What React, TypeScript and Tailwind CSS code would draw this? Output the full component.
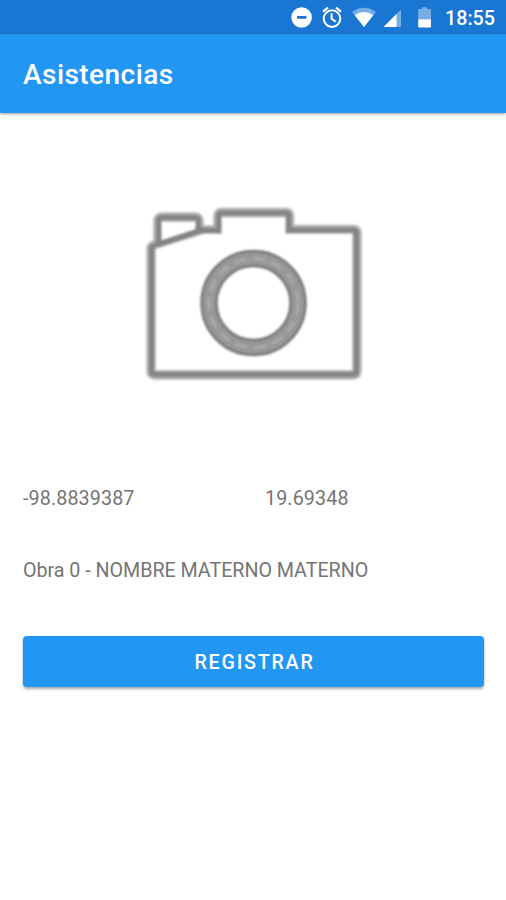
const silhouette =
  "M155 374.5 Q151.5 374.5 151.5 371 V249 Q151.5 246.5 154 245.5 L201 230.5 H218.5 V216 Q218.5 213 221.5 213 H286 Q289 213 289 216 V230 H353.5 Q356.5 230 356.5 233 V371 Q356.5 374.5 353 374.5 Z M158.5 243 V221 Q158.5 217.5 162 217.5 H195 Q198.5 217.5 198.5 221 V230";

function StatusIcons() {
  return (
    <svg className="h-[34px] w-[146px] shrink-0" viewBox="290 0 146 34" fill="none">
      <circle cx="301.6" cy="17.5" r="10.3" fill="#fff" />
      <rect x="297" y="16" width="9.4" height="2.7" rx="0.5" fill="#1976d2" />
      <g stroke="#fff" strokeWidth="2">
        <circle cx="332" cy="18.6" r="8.3" />
        <path d="M323 11.6 L328 7.6 M341 11.6 L336 7.6" strokeWidth="2.2" />
        <path d="M331.6 13.2 V18.8 L335.8 21.6" />
      </g>
      <path d="M352 12 Q364 3.4 376 12 L364 27 Z" fill="#75ade4" />
      <path d="M354.8 15.2 Q364 8.8 373.2 15.2 L364 27 Z" fill="#fff" />
      <path d="M383.5 27 L401 9.5 V27 Z" fill="#75ade4" />
      <path d="M383.5 27 L396.5 14 V27 Z" fill="#fff" />
      <path d="M418.2 10 Q418.2 9 419.2 9 H422 V7.3 H427 V9 H430 Q431 9 431 10 V19.5 H418.2 Z" fill="#75ade4" />
      <path d="M418.2 19.3 H431 V26.5 Q431 27.5 430 27.5 H419.2 Q418.2 27.5 418.2 26.5 Z" fill="#fff" />
    </svg>
  );
}

function Camera() {
  return (
    <svg className="h-[190px] w-[226px]" viewBox="140 200 226 190" fill="none">
      <defs>
        <filter id="soften" filterUnits="userSpaceOnUse" x="140" y="200" width="226" height="190">
          <feGaussianBlur stdDeviation="0.8" />
        </filter>
      </defs>
      <g filter="url(#soften)">
        <path d={silhouette} stroke="#b4b4b4" strokeWidth="10.5" strokeLinejoin="round" />
        <path d={silhouette} stroke="#858585" strokeWidth="5.5" />
        <path d="M162 222 H195 V229 L162 240 Z M204 234 H222 V217.5 H285 V234 H352 V370 H156 V249 Z" fill="#fff" />
        <path d="M158 244.5 L201 230.5 H206" stroke="#858585" strokeWidth="6" />
      </g>
      <g filter="url(#soften)">
        <circle cx="253.5" cy="303" r="44.5" stroke="#7a7a7a" strokeWidth="17.5" />
        <circle cx="253.5" cy="303" r="44.5" stroke="#989898" strokeWidth="12" />
        <circle cx="253.5" cy="303" r="44.5" stroke="#adadad" strokeWidth="2.5" strokeDasharray="12 7" />
      </g>
    </svg>
  );
}

export default function App() {
  return (
    <div className="flex h-[900px] w-[506px] flex-col overflow-hidden bg-white font-[Roboto,sans-serif]">
      <div className="flex h-[34px] shrink-0 items-center justify-end bg-[#1976d2] pr-[11px] text-white">
        <StatusIcons />
        <span className="ml-[9px] mt-[3px] whitespace-nowrap text-[19.7px] font-medium leading-none">18:55</span>
      </div>
      <header className="z-10 flex h-[79px] shrink-0 items-center bg-[#2196f3] px-[23px] pt-[3px] shadow-[0_1px_3px_rgba(0,0,0,0.4)]">
        <h1 className="text-[28px] font-medium leading-none tracking-[0.45px] text-white">Asistencias</h1>
      </header>
      <main className="flex flex-col px-[23px] text-[19.7px] leading-6 text-[#757575]">
        <div className="mt-[87px] flex justify-center">
          <Camera />
        </div>
        <div className="mt-[97px] flex tracking-[0.12px]">
          <span className="w-[242px]">-98.8839387</span>
          <span>19.69348</span>
        </div>
        <p className="mt-12 whitespace-nowrap tracking-[-0.03px]">Obra 0 - NOMBRE MATERNO MATERNO</p>
        <button className="mt-[53.4px] h-[50.4px] w-[461px] rounded-[4px] bg-[#2196f3] pl-[2px] pt-[3px] text-[19.7px] font-medium tracking-[1.76px] text-white shadow-[0_2px_3px_rgba(0,0,0,0.35)]">
          REGISTRAR
        </button>
      </main>
    </div>
  );
}
